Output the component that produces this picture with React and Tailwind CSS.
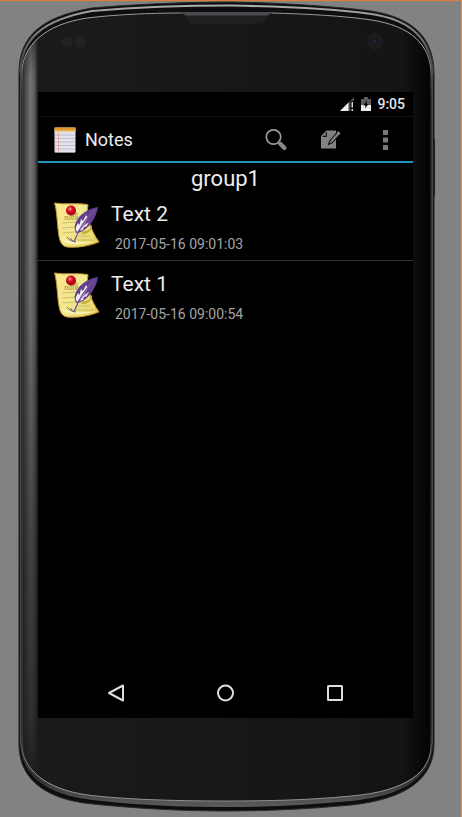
import React from "react";

const OUTER =
  "M19 72 C19 36 40 16 92 7 C140 3 188 1 232 1 C290 2 340 6 372 10 C416 17 435 38 435 74 V744 C435 778 408 799 352 805 C310 809 270 811 227 811 C170 811 120 807 84 803 C38 796 19 774 19 744 Z";
const INNER =
  "M22 72 C22 46 44 23 88 17 C120 13 160 12 182 12 H272 C310 13 345 15 372 19 C412 25 432 44 432 74 V744 C432 772 408 791 352 796 C310 800 270 801 227 801 C170 801 120 799 88 795 C44 789 22 768 22 744 Z";

function PhoneShell() {
  return (
    <svg
      className="absolute inset-0 h-full w-full"
      viewBox="0 0 462 817"
      preserveAspectRatio="none"
      aria-hidden="true"
    >
      <defs>
        <linearGradient id="side" x1="22" x2="38" y1="0" y2="0" gradientUnits="userSpaceOnUse">
          <stop offset="0" stopColor="#222222" />
          <stop offset="0.2" stopColor="#484848" />
          <stop offset="0.55" stopColor="#747474" />
          <stop offset="0.8" stopColor="#585858" />
          <stop offset="1" stopColor="#1c1c1c" />
        </linearGradient>
        <linearGradient id="fade" x1="0" x2="0" y1="30" y2="790" gradientUnits="userSpaceOnUse">
          <stop offset="0" stopColor="#1a1a1a" stopOpacity="0.6" />
          <stop offset="0.06" stopColor="#1a1a1a" stopOpacity="0" />
          <stop offset="0.35" stopColor="#1a1a1a" stopOpacity="0.05" />
          <stop offset="0.65" stopColor="#1a1a1a" stopOpacity="0.5" />
          <stop offset="0.9" stopColor="#1a1a1a" stopOpacity="0.75" />
          <stop offset="1" stopColor="#1a1a1a" stopOpacity="1" />
        </linearGradient>
        <linearGradient id="glass" x1="22" x2="432" y1="0" y2="0" gradientUnits="userSpaceOnUse">
          <stop offset="0" stopColor="#1b1b1b" />
          <stop offset="0.93" stopColor="#141414" />
          <stop offset="1" stopColor="#030303" />
        </linearGradient>
        <linearGradient id="rim" x1="0" x2="0" y1="0" y2="80" gradientUnits="userSpaceOnUse">
          <stop offset="0" stopColor="#b4b6b4" />
          <stop offset="0.3" stopColor="#858585" />
          <stop offset="0.7" stopColor="#4b4b4b" />
          <stop offset="1" stopColor="#4b4b4b" />
        </linearGradient>
        <linearGradient id="line" x1="0" x2="0" y1="0" y2="811" gradientUnits="userSpaceOnUse">
          <stop offset="0" stopColor="#8d8f98" />
          <stop offset="0.05" stopColor="#b0b0b0" />
          <stop offset="0.12" stopColor="#4a4a4a" />
          <stop offset="0.9" stopColor="#484848" />
          <stop offset="0.96" stopColor="#a0a0a0" />
          <stop offset="1" stopColor="#85878a" />
        </linearGradient>
        <linearGradient id="chin" x1="0" x2="0" y1="744" y2="808" gradientUnits="userSpaceOnUse">
          <stop offset="0" stopColor="#303030" />
          <stop offset="0.6" stopColor="#353535" />
          <stop offset="1" stopColor="#5c5d5f" />
        </linearGradient>
        <pattern id="mesh" width="4" height="4" patternUnits="userSpaceOnUse">
          <rect width="4" height="4" fill="#262626" />
          <circle cx="1" cy="1" r="0.8" fill="#090909" />
          <circle cx="3" cy="3" r="0.8" fill="#090909" />
        </pattern>
        <clipPath id="inner">
          <path d={INNER} />
        </clipPath>
      </defs>
      <path d="M434 138 h2 v57 h-2 Z" fill="#202020" />
      <path d={OUTER} fill="#0e0e0f" stroke="#2a2a2a" strokeWidth="1" />
      <path
        d="M20.5 72 C21 38 42 19 92 10 C140 6 188 4.500 232 4.500 C290 5.500 340 8.500 372 13 C414 19 433 40 433.500 74"
        fill="none"
        stroke="url(#rim)"
        strokeWidth="2.200"
      />
      <path
        d="M20 744 C22 772 40 792 86 799 C120 804 170 807 227 807 C270 807 310 805 352 801 C408 795 432 776 434 744 Z"
        fill="url(#chin)"
      />
      <path d="M20.500 72 V744 M433.500 74 V744" stroke="#4b4b4b" strokeWidth="1" />
      <path d={INNER} fill="url(#glass)" />
      <g clipPath="url(#inner)">
        <rect x="22" y="30" width="16" height="762" fill="url(#side)" />
        <rect x="22" y="30" width="16" height="762" fill="url(#fade)" />
      </g>
      <path d={INNER} fill="none" stroke="url(#line)" strokeWidth="1" />
      <path d="M181 12 H273 C267 13 267 22 261 22.500 H193 C187 22 187 13 181 12 Z" fill="url(#mesh)" />
      <path d="M181 11 H273 L268 14.500 H186 Z" fill="#4a4b50" />
      <circle cx="67" cy="41" r="5.500" fill="#222222" />
      <circle cx="81" cy="41" r="5.500" fill="#222222" />
      <circle cx="376" cy="40.500" r="8.500" fill="#1c1c1e" />
      <circle cx="375.500" cy="40.500" r="4" fill="#191a20" />
      <circle cx="375.500" cy="40.500" r="1.300" fill="#25254e" />
    </svg>
  );
}

function StatusBar() {
  return (
    <div className="flex h-6 items-center justify-end pr-2 text-[#e4e4e4]">
      <svg className="mr-1.5 h-4 w-4" viewBox="0 0 16 16" aria-hidden="true">
        <path d="M15 1 V15 H1 Z" fill="#4d4d4d" />
        <path d="M9.500 6.500 V15 H1 Z" fill="#ececec" />
        <rect x="11.500" y="5" width="3.500" height="10" fill="#000" />
        <path d="M12.500 6 h1.500 v5.500 h-1.500 Z M12.500 13 h1.500 v2 h-1.500 Z" fill="#dcdcdc" />
      </svg>
      <svg className="mr-1.5 h-4 w-2.5" viewBox="0 0 10 16" aria-hidden="true">
        <path d="M3 1 H7 V3 H10 V15 H0 V3 H3 Z" fill="#5c5c5c" />
        <path d="M0 9 H10 V15 H0 Z" fill="#ececec" />
        <path d="M6 4 L2.500 9.500 H4.500 L4 12.500 L7.500 8 H5.500 Z" fill="#000" />
      </svg>
      <span className="text-sm font-medium">9:05</span>
    </div>
  );
}

function NotepadIcon() {
  return (
    <svg className="h-[26px] w-[22px]" viewBox="0 0 22 26" aria-hidden="true">
      <rect x="0.500" y="0.500" width="21" height="25" rx="1" fill="#e6e4ea" />
      <rect x="0.500" y="0.500" width="21" height="4" fill="#e09a2c" />
      <rect x="0.500" y="3.500" width="21" height="1" fill="#f3d18c" />
      <path d="M1 8 H21 M1 11.500 H21 M1 15 H21 M1 18.500 H21 M1 22 H21" stroke="#b9b6d2" strokeWidth="0.900" />
      <path d="M4.500 5 V25" stroke="#e5a3a3" strokeWidth="0.900" />
      <path d="M1 25.500 H21" stroke="#8f8f8f" />
    </svg>
  );
}

function ActionBar() {
  return (
    <header className="flex h-[47px] items-center border-b-2 border-[#2493bb] pl-4 pt-0.5 shadow-[inset_0_1px_0_#101010]">
      <NotepadIcon />
      <h1 className="ml-[9px] flex-1 text-lg leading-6 text-[#ececec]">Notes</h1>
      <button type="button" aria-label="Search" className="flex h-11 w-[55px] items-center justify-center">
        <svg className="h-6 w-6" viewBox="0 0 24 24" fill="none" aria-hidden="true">
          <circle cx="9.500" cy="9" r="7.200" stroke="#9a9a9a" strokeWidth="1.700" />
          <path d="M14.500 14 L16.500 16" stroke="#8a8a8a" strokeWidth="2" />
          <path d="M16 15.500 L20.500 20" stroke="#8a8a8a" strokeWidth="4" strokeLinecap="round" />
        </svg>
      </button>
      <button type="button" aria-label="New note" className="flex h-11 w-[55px] items-center justify-center">
        <svg className="h-5 w-5" viewBox="0 0 20 20" aria-hidden="true">
          <path d="M5.500 0.500 H15 V18.500 H0 V6 Z" fill="#828282" />
          <path d="M1.500 6.300 H5.300 V2.300" fill="none" stroke="#181818" strokeWidth="1.200" />
          <path d="M7.500 14.500 L9 10.500 L16.500 2 L19 4.300 L11.500 12.500 Z" fill="#828282" stroke="#111" strokeWidth="1.100" />
          <path d="M15.800 2.800 L17.300 1.300 L19.500 3.300 L18 4.800 Z" fill="#909090" />
        </svg>
      </button>
      <button type="button" aria-label="More options" className="flex h-11 w-[55px] items-center justify-center">
        <svg className="h-5 w-5" viewBox="0 0 20 20" fill="#787878" aria-hidden="true">
          <rect x="7" y="0" width="5" height="5" />
          <rect x="7" y="7.500" width="5" height="5" />
          <rect x="7" y="15" width="5" height="5" />
        </svg>
      </button>
    </header>
  );
}

function NoteIcon() {
  return (
    <svg className="h-[50px] w-[50px] shrink-0" viewBox="0 -1 50 50" aria-hidden="true">
      <defs>
        <linearGradient id="paper" x1="0" x2="1" y1="0" y2="1">
          <stop offset="0" stopColor="#f7e98c" />
          <stop offset="0.5" stopColor="#f3e78f" />
          <stop offset="0.8" stopColor="#eadb72" />
          <stop offset="1" stopColor="#d8bd48" />
        </linearGradient>
        <radialGradient id="pin" cx="0.4" cy="0.35" r="0.7">
          <stop offset="0" stopColor="#ff9aa0" />
          <stop offset="0.35" stopColor="#d90f25" />
          <stop offset="1" stopColor="#99000f" />
        </radialGradient>
      </defs>
      <path
        d="M2.500 3 C13 5 25 2.500 36 4.500 C34 16 38 29 47 42 C37 46 26 48 15 47 C8 46 7 38 6 29 C5 19 4.500 9 2.500 3 Z"
        fill="url(#paper)"
        stroke="#bf9430"
        strokeWidth="1"
      />
      <path d="M8 38 C10 44 22 46.500 45 41.500 C34 42 20 43 8 38 Z" fill="#f9f1ae" />
      <path d="M10 23 L27 22 M10 28 L25 27 M11 33 L23 32 M26 36 L38 36 M25 40 L41 40" stroke="#c0b266" strokeWidth="0.800" />
      <text x="12" y="20" fill="#a09251" className="font-serif text-[8px] italic">
        note
      </text>
      <ellipse cx="21" cy="14" rx="5" ry="2" fill="#b89e50" opacity="0.6" />
      <circle cx="19" cy="10.500" r="5" fill="url(#pin)" />
      <path d="M31 31 C36 32 39 28 40 24 C41 30 36 35 29 34 Z" fill="#c7af3c" />
      <path
        d="M46 7 C36 8 25 16 23 25 C22 28 23 30 24 33 C30 33 36 28 40 22 C43 17 45 13 46 7 Z"
        fill="#65408d"
      />
      <path
        d="M37 16 L33 23 L25 32 C24 30 23 28 24.500 26 L26 23 L27.500 25 L29 19 L31 21 L34 15 L35 17 Z"
        fill="#f2edf5"
      />
      <path d="M27 31 L31 26 L37 22 L34.500 26.500 L32 27 L31 30 Z" fill="#e6dded" />
      <path d="M43 10 C34 18 27 28 22 42" stroke="#765096" strokeWidth="1.300" fill="none" />
      <path d="M15 37 C18 41 20 41 24 42 M18 38 L22 42" stroke="#676773" strokeWidth="1" fill="none" />
    </svg>
  );
}

const notes = [
  { title: "Text 2", date: "2017-05-16 09:01:03" },
  { title: "Text 1", date: "2017-05-16 09:00:54" },
];

function NoteList() {
  return (
    <ul className="-mt-1 flex-1">
      {notes.map((note) => (
        <li
          key={note.title}
          className="flex items-start border-b border-[#303030] pb-1.5 pl-3.5 pt-2 last:border-b-0"
        >
          <NoteIcon />
          <div className="ml-[9px] pt-[3px]">
            <h3 className="text-[21px] leading-6 text-[#ebebeb]">{note.title}</h3>
            <time className="mt-2 block pl-1 text-sm leading-5 text-[#a5a5a5]">{note.date}</time>
          </div>
        </li>
      ))}
    </ul>
  );
}

function NavBar() {
  return (
    <nav className="flex h-[50px] items-center justify-center gap-[85px]">
      <button type="button" aria-label="Back" className="h-6 w-6">
        <svg viewBox="0 0 24 24" fill="none" stroke="#dedede" strokeWidth="2" aria-hidden="true">
          <path d="M18 4.500 V19.500 L4 12 Z" strokeLinejoin="round" />
        </svg>
      </button>
      <button type="button" aria-label="Home" className="h-6 w-6">
        <svg viewBox="0 0 24 24" fill="none" stroke="#dedede" strokeWidth="2" aria-hidden="true">
          <circle cx="11.500" cy="12" r="7.500" />
        </svg>
      </button>
      <button type="button" aria-label="Recent apps" className="h-6 w-6">
        <svg viewBox="0 0 24 24" fill="none" stroke="#dedede" strokeWidth="2" aria-hidden="true">
          <rect x="5" y="5" width="14" height="14" rx="0.500" />
        </svg>
      </button>
    </nav>
  );
}

export default function App() {
  return (
    <div className="relative flex min-h-screen flex-col border-r border-t border-r-[#db9362] border-t-[#de7c38] bg-[#828282] font-['Roboto',sans-serif]">
      <PhoneShell />
      <main className="relative mb-[99px] ml-[38px] mr-12 mt-[91px] flex flex-1 flex-col bg-black">
        <StatusBar />
        <ActionBar />
        <h2 className="text-center text-[22px] leading-8 text-[#ededed]">group1</h2>
        <NoteList />
        <NavBar />
      </main>
    </div>
  );
}
